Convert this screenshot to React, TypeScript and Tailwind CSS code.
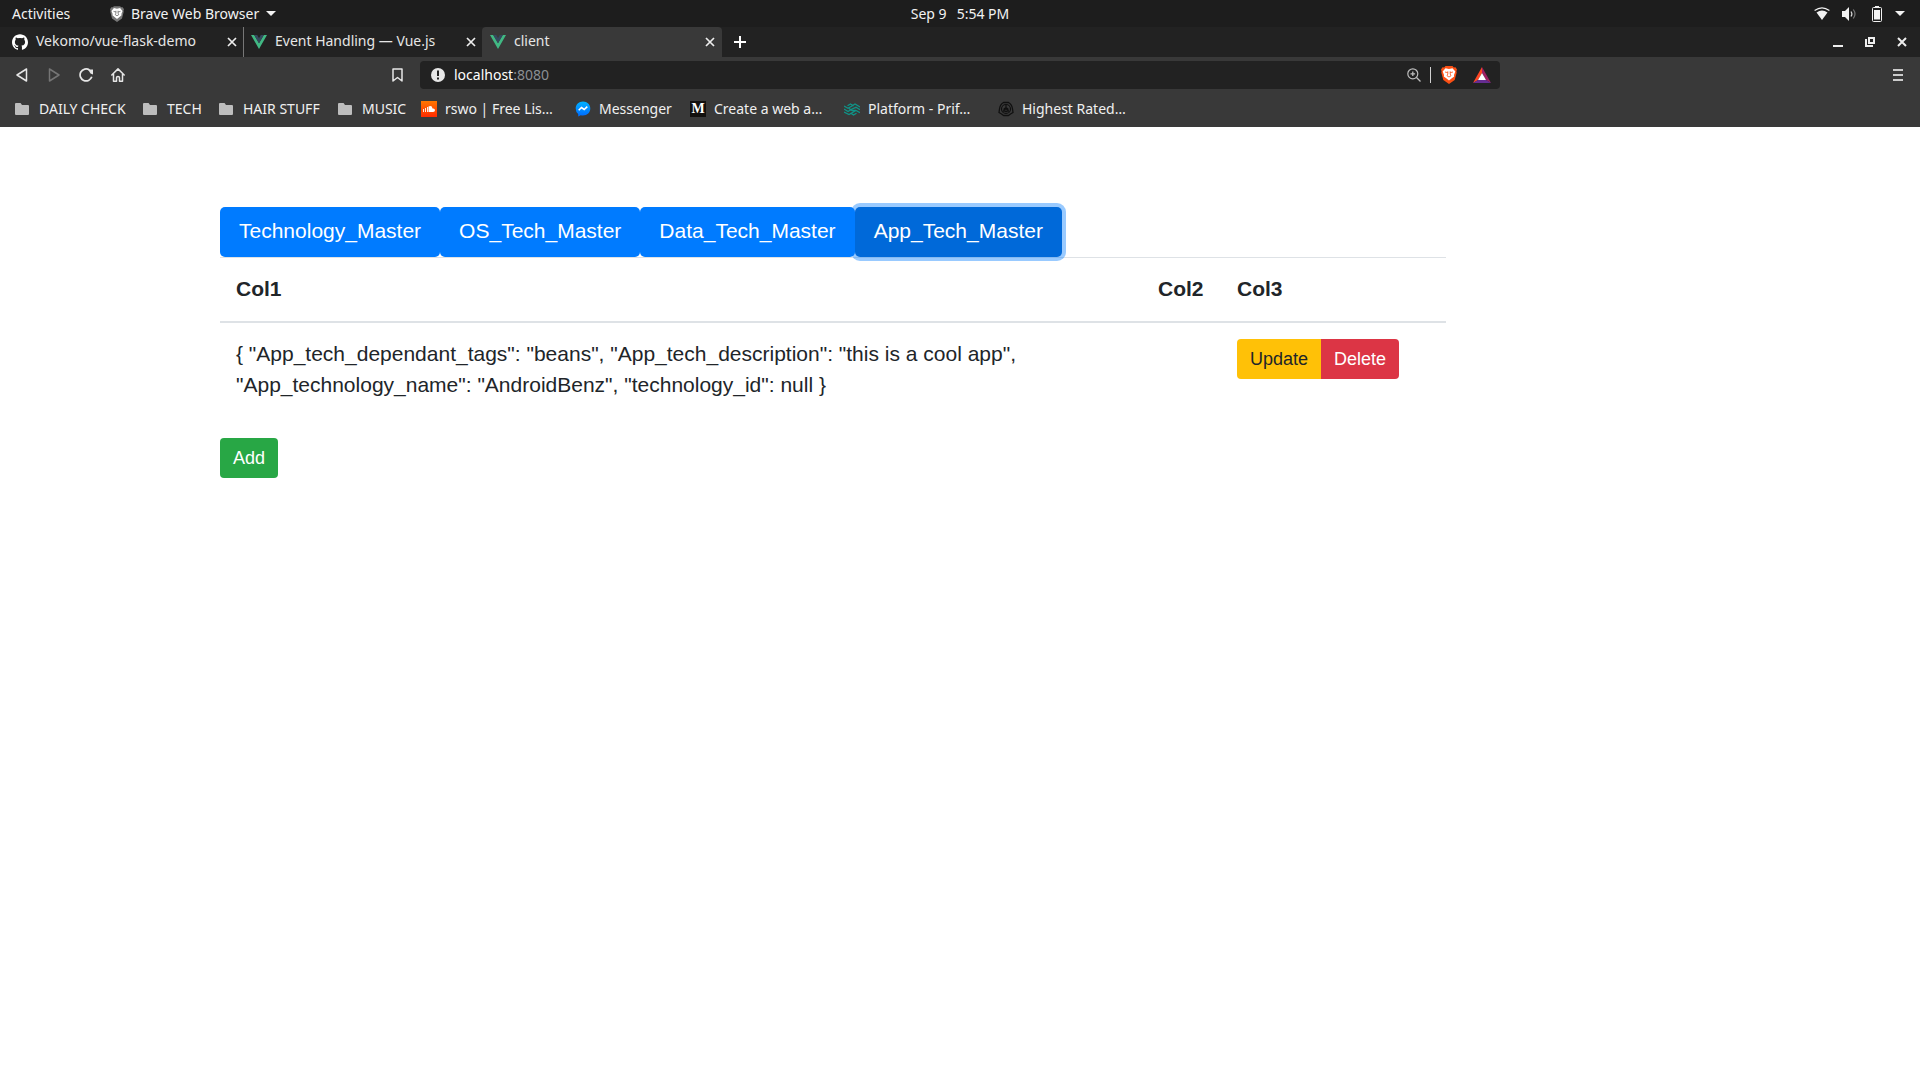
import React from "react";
import { SiGithub } from "react-icons/si";

const chromeFont = "font-['Noto_Sans',sans-serif]";

function VueLogo() {
  return (
    <svg viewBox="0 0 16 14" className="h-[14px] w-4 shrink-0" aria-hidden="true">
      <path fill="#41b883" d="M0 0h3.2L8 8.2 12.8 0H16L8 14z" />
      <path fill="#35495e" d="M3.2 0h3L8 3.2 9.8 0h3L8 8.2z" />
    </svg>
  );
}

function Lion({ shield, face, mark, className }: { shield: string; face: string; mark: string; className: string }) {
  return (
    <svg viewBox="0 0 16 18" className={className} aria-hidden="true">
      <path fill={shield} d="M4.5 0h7l1.3 1.4 1.7-.1L16 3.5l-.6 1.7.3 1.3-2 7.5L8 18l-5.700-4L.3 6.500l.3-1.300L0 3.500 1.500 1.300l1.700.1z" />
      <path fill={face} d="M4.500 2.200 8 3l3.500-.8L14.300 5.500l-1.300 3.500.2 1.500-2.400 1.800L8 14.600l-2.800-2.300-2.400-1.800.2-1.500L1.700 5.500z" />
      <path fill="none" stroke={mark} strokeWidth=".8" d="M4 6l2.800.7M12 6l-2.800.7M6.800 5.300v2.700L6 9.800 8 11l2-1.200-.8-1.800V5.300" />
    </svg>
  );
}

function Folder() {
  return (
    <svg viewBox="0 0 14 12" className="mr-[2px] h-3 w-[14px] shrink-0" fill="#bdbdbd" aria-hidden="true">
      <path d="M1 0h4.600L7 2h6a1 1 0 0 1 1 1v8a1 1 0 0 1-1 1H1a1 1 0 0 1-1-1V1a1 1 0 0 1 1-1z" />
    </svg>
  );
}

function CloseIcon({ heavy = false }: { heavy?: boolean }) {
  return (
    <svg viewBox="0 0 10 10" className="size-[10px]" stroke="#eee" strokeWidth={heavy ? 2 : 1.7} aria-hidden="true">
      <path d="M1 1l8 8M9 1L1 9" />
    </svg>
  );
}

function TopBar() {
  return (
    <header className="grid h-[27px] grid-cols-[1fr_auto_1fr] items-center bg-[#1d1d1d] text-[14px] leading-5 text-[#f2f2f2]">
      <div className="flex items-center pl-3">
        <button className="w-[98px] text-left">Activities</button>
        <button className="flex items-center gap-[7px]">
          <Lion shield="#777" face="#fff" mark="#555" className="h-4 w-[14px]" />
          <span>Brave Web Browser</span>
          <svg viewBox="0 0 10 5" className="h-[5px] w-[10px]" fill="#f2f2f2" aria-hidden="true"><path d="M0 0h10L5 5z" /></svg>
        </button>
      </div>
      <button className="flex gap-[10px]"><span>Sep 9</span><span>5:54 PM</span></button>
      <div className="flex items-center justify-end pr-[15px]">
        <svg viewBox="0 0 16 13" className="mr-[12px] h-[13px] w-4" aria-label="Wi-Fi">
          <path fill="#f2f2f2" d="M2.500 5.500Q8 1.500 13.500 5.500L8 13z" />
          <path fill="none" stroke="#f2f2f2" strokeWidth="1.200" d="M.6 3.500Q8-1.800 15.400 3.500" />
        </svg>
        <svg viewBox="0 0 15 14" className="mr-[15px] h-[14px] w-[15px]" aria-label="Volume">
          <path fill="#f2f2f2" d="M0 4h3l4-4v14l-4-4H0z" />
          <path fill="none" stroke="#ddd" strokeWidth="1.200" d="M9 4.500q1.800 2.500 0 5" />
          <path fill="none" stroke="#777" strokeWidth="1.200" d="M11.300 2.500q3.400 4.500 0 9" />
        </svg>
        <svg viewBox="0 0 10 16" className="mr-[13px] h-4 w-[10px]" aria-label="Battery">
          <path fill="#f2f2f2" d="M3 0h4v1.500H3zM2 4h6v9.500H2z" />
          <rect x=".5" y="1.500" width="9" height="14" rx="1" fill="none" stroke="#f2f2f2" />
        </svg>
        <svg viewBox="0 0 10 5" className="h-[5px] w-[10px]" fill="#f2f2f2" aria-hidden="true"><path d="M0 0h10L5 5z" /></svg>
      </div>
    </header>
  );
}

function TabStrip() {
  return (
    <nav className="flex h-[30px] items-center bg-[#222] text-[14px] leading-5 text-[#e6e6e6]" aria-label="Browser tabs">
      <div className="flex h-full w-[244px] items-center border-r border-[#777] pr-[6px] pl-3">
        <SiGithub className="mr-2 size-4 shrink-0 text-white" />
        <span className="flex-1 pb-0.5 whitespace-nowrap">Vekomo/vue-flask-demo</span>
        <button aria-label="Close tab"><CloseIcon /></button>
      </div>
      <div className="flex h-full w-[238px] items-center pr-[6px] pl-[7px]">
        <VueLogo />
        <span className="ml-2 flex-1 pb-0.5 whitespace-nowrap">Event Handling — Vue.js</span>
        <button aria-label="Close tab"><CloseIcon /></button>
      </div>
      <div className="flex h-full w-[240px] items-center rounded-t bg-[#393939] pr-[7px] pl-2">
        <VueLogo />
        <span className="ml-2 flex-1 pb-0.5">client</span>
        <button aria-label="Close tab"><CloseIcon /></button>
      </div>
      <button aria-label="New tab" className="ml-3">
        <svg viewBox="0 0 12 12" className="size-3" stroke="#fff" strokeWidth="2" aria-hidden="true"><path d="M6 0v12M0 6h12" /></svg>
      </button>
      <div className="ml-auto flex items-center gap-[22px] pr-[13px]">
        <button aria-label="Minimize">
          <svg viewBox="0 0 10 10" className="size-[10px]" fill="#eee" aria-hidden="true"><path d="M0 8h10v2H0z" /></svg>
        </button>
        <button aria-label="Restore">
          <svg viewBox="0 0 10 10" className="size-[10px]" fill="none" stroke="#eee" strokeWidth="2" aria-hidden="true"><path d="M4 1h5v5H4zM1 2v7h7" /></svg>
        </button>
        <button aria-label="Close window"><CloseIcon heavy /></button>
      </div>
    </nav>
  );
}

function AddressRow() {
  return (
    <div className="flex h-9 items-center bg-[#393939]">
      <div className="flex w-[403px] items-center pl-4">
        <button aria-label="Back" className="mr-[20px]">
          <svg viewBox="0 0 12 14" className="h-[14px] w-3" fill="none" stroke="#e6e6e6" strokeWidth="1.500" strokeLinejoin="round" aria-hidden="true"><path d="M10.500 1v12L1 7z" /></svg>
        </button>
        <button aria-label="Forward" className="mr-[19px]">
          <svg viewBox="0 0 12 14" className="h-[14px] w-3" fill="none" stroke="#757575" strokeWidth="1.500" strokeLinejoin="round" aria-hidden="true"><path d="M1.500 1v12L11 7z" /></svg>
        </button>
        <button aria-label="Reload" className="mr-[17px]">
          <svg viewBox="0 0 15 14" className="h-[14px] w-[15px]" fill="none" stroke="#e6e6e6" strokeWidth="1.700" aria-hidden="true"><path d="M12.800 8.800A6 6 0 1 1 10.500 2" /><path fill="#e6e6e6" stroke="none" d="M9 1.500h5v5l-2.500-1z" /></svg>
        </button>
        <button aria-label="Home">
          <svg viewBox="0 0 14 14" className="size-[14px]" fill="none" stroke="#e6e6e6" strokeWidth="1.500" strokeLinejoin="round" strokeLinecap="round" aria-hidden="true"><path d="M.8 7L7 .9 13.200 7M2.500 6v7.200h3V9.800q0-1.300 1.500-1.300t1.500 1.300v3.400h3V6" /></svg>
        </button>
        <button aria-label="Bookmark this page" className="ml-auto">
          <svg viewBox="0 0 11 14" className="h-[14px] w-[11px]" fill="none" stroke="#e6e6e6" strokeWidth="1.500" strokeLinejoin="round" aria-hidden="true"><path d="M1 1h9v12l-4.500-3.500L1 13z" /></svg>
        </button>
      </div>
      <div className="ml-[17px] flex h-7 w-[1080px] items-center rounded bg-[#222] pl-[11px]">
        <svg viewBox="0 0 14 14" className="size-[14px]" aria-hidden="true">
          <circle cx="7" cy="7" r="7" fill="#e8e8e8" />
          <path fill="#222" d="M6 2.500h2v5.500H6zM6 9.500h2v2H6z" />
        </svg>
        <button aria-label="Address" className="ml-[9px] flex-1 text-left text-[14px] leading-5 text-white">localhost<span className="text-[#8b8f94]">:8080</span></button>
        <button aria-label="Zoom">
          <svg viewBox="0 0 14 14" className="size-[14px]" fill="none" stroke="#bdbdbd" aria-hidden="true"><circle cx="5.800" cy="5.800" r="5" strokeWidth="1.200" /><path strokeWidth="1.300" d="M9.500 9.500l4 4M5.800 3.500v4.600M3.500 5.800h4.600" /></svg>
        </button>
        <span className="ml-[9px] h-4 w-px bg-[#d0d0d0]" />
        <button aria-label="Brave Shields" className="ml-[10px]"><Lion shield="#fb4f14" face="#fff" mark="#fb4f14" className="h-[18px] w-4" /></button>
        <button aria-label="Brave Rewards" className="mr-[9px] ml-4">
          <svg viewBox="0 0 18 16" className="h-4 w-[18px]" aria-hidden="true"><path fill="#ff4724" d="M9 0L0 16l5-3 4-7z" /><path fill="#9e1f63" d="M9 0l9 16-5-3-4-7z" /><path fill="#662d91" d="M0 16h18l-5-3H5z" /><path fill="#fff" d="M9 6l4 7H5z" /></svg>
        </button>
      </div>
      <button aria-label="Menu" className="mr-[17px] ml-auto">
        <svg viewBox="0 0 10 12" className="h-3 w-[10px]" fill="#ccc" aria-hidden="true"><path d="M0 0h10v2H0zM0 5h10v2H0zM0 10h10v2H0z" /></svg>
      </button>
    </div>
  );
}

const bookmarks: { label: string; width: string; icon: React.ReactNode }[] = [
  { label: "DAILY CHECK", width: "w-[128px]", icon: <Folder /> },
  { label: "TECH", width: "w-[76px]", icon: <Folder /> },
  { label: "HAIR STUFF", width: "w-[119px]", icon: <Folder /> },
  { label: "MUSIC", width: "w-[83px]", icon: <Folder /> },
  {
    label: "rswo | Free Lis…",
    width: "w-[154px]",
    icon: (
      <svg viewBox="0 0 16 16" className="size-4 shrink-0" aria-hidden="true">
        <defs><linearGradient id="sc" x2="0" y2="1"><stop stopColor="#ff7700" /><stop offset="1" stopColor="#ff2b00" /></linearGradient></defs>
        <path fill="url(#sc)" d="M0 0h16v16H0z" />
        <path stroke="#fff" d="M2.500 8v3M4.500 7v4M6.500 6v5" strokeWidth=".9" />
        <path fill="#fff" d="M7.500 5.500q3.500-1.500 4 2 2.500-.3 2.500 1.700 0 1.800-2 1.800H7.500z" />
      </svg>
    ),
  },
  {
    label: "Messenger",
    width: "w-[115px]",
    icon: (
      <svg viewBox="0 0 16 16" className="size-4 shrink-0" aria-hidden="true">
        <defs><linearGradient id="ms" x2="0" y2="1"><stop stopColor="#00b2ff" /><stop offset="1" stopColor="#006aff" /></linearGradient></defs>
        <path fill="url(#ms)" d="M8 .5c4.200 0 7.300 3 7.300 7s-3.100 7-7.300 7q-1.200 0-2.200-.3L3.200 15.400V13Q.7 11 .7 7.500C.7 3.500 3.800.5 8 .5z" />
        <path fill="none" stroke="#fff" strokeWidth="1.600" d="M3.700 9.300L6.500 6.500l2.700 2 3.100-2.800" />
      </svg>
    ),
  },
  {
    label: "Create a web a…",
    width: "w-[154px]",
    icon: <span aria-hidden="true" className="flex size-4 shrink-0 items-center justify-center bg-[#12100e] font-['Liberation_Serif',serif] text-[14px] leading-4 font-bold text-white">M</span>,
  },
  {
    label: "Platform - Prif…",
    width: "w-[154px]",
    icon: (
      <svg viewBox="0 0 16 13" className="h-[13px] w-4 shrink-0" fill="none" stroke="#0f9488" strokeWidth="1.300" aria-hidden="true">
        <path d="M0 3l4 2.300L8 3l3-2 5 3M3.500 2.700L6.500 1l3 2M0 6l4 2.500L8 6l4-1.700 4 2.400M5 5.500l3 2 4-.2M0 9l5 2.500L12 7.500l4 2.300M6.500 10l3 2 3-1.800" />
      </svg>
    ),
  },
  {
    label: "Highest Rated…",
    width: "w-[150px]",
    icon: (
      <svg viewBox="0 0 16 16" className="size-4 shrink-0" fill="none" stroke="#101010" aria-hidden="true">
        <path strokeWidth="1.300" strokeLinejoin="round" d="M5.500 1.500h5q3.500 2 4 6.500l.5 3.500-2.500 1.500-2 1.500h-5l-2-1.500L1 11.500 1.500 8q.5-4.500 4-6.500z" />
        <circle cx="8" cy="8" r="4.500" strokeWidth="1.200" />
        <path strokeWidth="1.200" d="M8 4v3.500l-3 3M8 7.500l3 3M5.500 8.500Q8 5 10.500 8.500M6.500 11q1.500-1.500 3 0" />
      </svg>
    ),
  },
];

function BookmarkBar() {
  return (
    <nav aria-label="Bookmarks" className="flex h-[34px] items-center bg-[#393939] pb-0.5 pl-[15px] text-[14px] leading-5 text-[#f0f0f0]">
      {bookmarks.map((b) => (
        <a key={b.label} href="#" className={`flex items-center gap-2 whitespace-nowrap ${b.width}`}>
          {b.icon}
          <span>{b.label}</span>
        </a>
      ))}
    </nav>
  );
}

const masters = ["Technology_Master", "OS_Tech_Master", "Data_Tech_Master", "App_Tech_Master"];

export default function App() {
  return (
    <div className="min-h-screen bg-white">
      <div className={chromeFont}>
        <TopBar />
        <TabStrip />
        <AddressRow />
        <BookmarkBar />
      </div>
      <main className="mr-[474px] ml-[220px] pt-20 font-['Liberation_Sans',Arial,sans-serif] text-[21px] leading-[31px] text-[#212529]">
        <div className="flex">
          {masters.map((name) => (
            <button
              key={name}
              className={
                name === "App_Tech_Master"
                  ? "relative h-[50px] rounded-[5px] bg-[#0069d9] px-[19px] pb-1 text-white ring-4 ring-[#007bff]/40"
                  : "h-[50px] rounded-[5px] bg-[#007bff] px-[19px] pb-1 text-white"
              }
            >
              {name}
            </button>
          ))}
        </div>
        <table className="w-full table-fixed border-collapse text-left">
          <thead>
            <tr className="h-16 border-t border-b-2 border-t-[#dee2e6] border-b-[#dee2e6] align-top">
              <th className="px-4 pt-[15px]">Col1</th>
              <th className="w-[79px] px-4 pt-[15px]">Col2</th>
              <th className="w-[225px] px-4 pt-[15px]">Col3</th>
            </tr>
          </thead>
          <tbody>
            <tr className="align-top">
              <td className="px-4 pt-[15px] pb-4">
                {'{ "App_tech_dependant_tags": "beans", "App_tech_description": "this is a cool app",'}
                <br />
                {'"App_technology_name": "AndroidBenz", "technology_id": null }'}
              </td>
              <td className="p-4" />
              <td className="p-4">
                <div className="flex text-[18px]">
                  <button className="h-10 rounded-l bg-[#ffc107] px-[13px] pt-0.5 text-[#212529]">Update</button>
                  <button className="h-10 rounded-r bg-[#dc3545] px-[13px] pt-0.5 text-white">Delete</button>
                </div>
              </td>
            </tr>
          </tbody>
        </table>
        <button className="mt-[22px] h-10 rounded bg-[#28a745] px-[13px] pt-0.5 text-[18px] text-white">Add</button>
      </main>
    </div>
  );
}
